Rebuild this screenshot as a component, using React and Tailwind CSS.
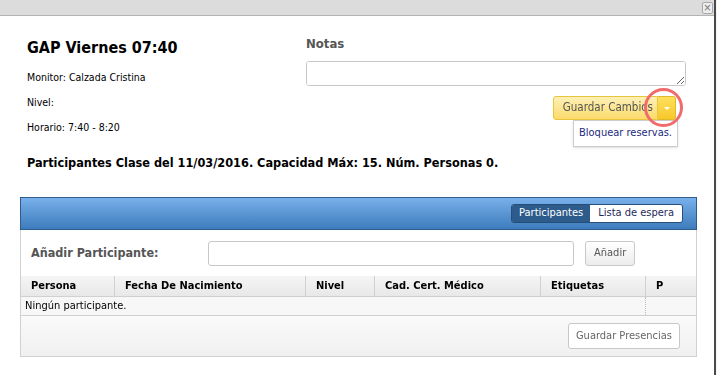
import React from "react";

const sans = { fontFamily: '"DejaVu Sans", Verdana, sans-serif' };

const columns = [
  { label: "Persona", w: "w-[94px]" },
  { label: "Fecha De Nacimiento", w: "w-[191px]" },
  { label: "Nivel", w: "w-[69px]" },
  { label: "Cad. Cert. Médico", w: "w-[166px]" },
  { label: "Etiquetas", w: "w-[105px]" },
  { label: "P", w: "flex-1" },
];

function SplitButton() {
  return (
    <div className="relative flex h-[24px]">
      <button className="h-full rounded-l-[3px] border border-[#e8c53c] bg-gradient-to-b from-[#fdf0b5] to-[#fbdb6a] pl-[9px] pr-[4px] text-[11.5px] text-[#555]">
        Guardar Cambios
      </button>
      <button className="flex h-full w-[18px] items-center justify-center rounded-r-[3px] border border-l-0 border-[#e0b82a] bg-gradient-to-b from-[#fde05a] to-[#f7c828]">
        <span className="h-0 w-0 border-x-[3px] border-t-[3px] border-x-transparent border-t-white" />
      </button>
      {/* highlight ring */}
      <span className="pointer-events-none absolute right-[-7px] top-[-8px] h-[39px] w-[39px] rounded-full border-[3px] border-[#f26b6b]" />
    </div>
  );
}

export default function App() {
  return (
    <div className="flex h-[375px] w-[717px] bg-white text-black" style={sans}>
      <div className="flex flex-1 flex-col">
        {/* title bar */}
        <div className="flex h-[16px] items-center justify-end border-b border-[#b4b4b4] bg-[#dcdcdc] pr-[1px]">
          <span className="flex h-[12px] w-[11px] items-center justify-center rounded-[2px] border border-[#a8a8a8] bg-[#eee] text-[10px] leading-none text-[#777]">
            ×
          </span>
        </div>

        {/* top info */}
        <div className="flex pl-[27px] pr-[28px] pt-[21px]">
          <div className="w-[279px]">
            <h1 className="text-[16px] font-bold leading-[22px] [font-stretch:condensed]">GAP Viernes 07:40</h1>
            <div className="mt-[12px] space-y-[13px] text-[10.5px] leading-[12px] [font-stretch:condensed]">
              <p>Monitor: Calzada Cristina</p>
              <p>Nivel:</p>
              <p>Horario: 7:40 - 8:20</p>
            </div>
          </div>
          <div className="flex flex-1 flex-col">
            <div className="mt-[-1px] text-[13px] font-bold leading-[16px] text-[#555] [font-stretch:condensed]">Notas</div>
            <textarea className="mt-[9px] h-[25px] w-full resize-y rounded-[3px] border border-[#c8c8c8] bg-white" />
            <div className="mt-[10px] flex flex-col items-end pr-[8px] [font-stretch:condensed]">
              <div className="mr-[2px]">
                <SplitButton />
              </div>
              <div className="flex h-[27px] items-center border border-[#ccc] bg-white px-[5px] text-[11px] text-[#1d2a80] shadow-sm">
                Bloquear reservas.
              </div>
            </div>
          </div>
        </div>

        <h2 className="mt-[8px] pl-[27px] text-[12.6px] font-bold leading-[16px] [font-stretch:condensed]">
          Participantes Clase del 11/03/2016. Capacidad Máx: 15. Núm. Personas 0.
        </h2>

        {/* panel */}
        <div className="ml-[20px] mr-[17px] mt-[26px] flex flex-col border border-[#d0d0d0] [font-stretch:condensed]">
          <div className="m-[-1px] mb-0 flex h-[33px] items-center justify-end border border-[#2e5c8c] bg-gradient-to-b from-[#78b0ea] to-[#3d7cbd] pr-[13px]">
            <div className="flex h-[19px] overflow-hidden rounded-[3px] border border-[#274e78] text-[11px]">
              <span className="flex items-center bg-[#2d5b8c] px-[7px] text-white">Participantes</span>
              <span className="flex items-center bg-white px-[8px] text-[#1e2a5a]">Lista de espera</span>
            </div>
          </div>
          <div className="flex h-[46px] items-center pl-[10px]">
            <span className="w-[177px] text-[12.5px] font-bold text-[#555]">Añadir Participante:</span>
            <input className="h-[25px] w-[366px] rounded-[3px] border border-[#c8c8c8]" />
            <button className="ml-[11px] h-[25px] rounded-[3px] border border-[#c8c8c8] bg-gradient-to-b from-white to-[#ececec] px-[8px] text-[11px] text-[#555]">
              Añadir
            </button>
          </div>
          <div className="flex h-[21px] border-b border-[#d0d0d0] bg-gradient-to-b from-[#f5f5f5] to-[#e8e8e8] text-[11px] font-bold">
            {columns.map((c, i) => (
              <div
                key={c.label}
                className={`${c.w} flex items-center px-[10px] ${i < columns.length - 1 ? "border-r border-[#d0d0d0]" : ""}`}
              >
                {c.label}
              </div>
            ))}
          </div>
          <div className="flex h-[19px] border-b border-[#d0d0d0] bg-[#f7f7f7] text-[11px]">
            <div className="flex w-[625px] items-center border-r border-dotted border-[#bbb] pl-[4px]">
              Ningún participante.
            </div>
          </div>
          <div className="flex h-[40px] items-center justify-end bg-gradient-to-b from-[#fafafa] to-[#f0f0f0] pr-[16px]">
            <button className="h-[26px] rounded-[3px] border border-[#c8c8c8] bg-white px-[7px] text-[11px] text-[#666]">
              Guardar Presencias
            </button>
          </div>
        </div>
      </div>
      <div className="w-[2px] bg-[#4a4a4a]" />
      <div className="w-[1px] bg-[#f4f4f4]" />
    </div>
  );
}
